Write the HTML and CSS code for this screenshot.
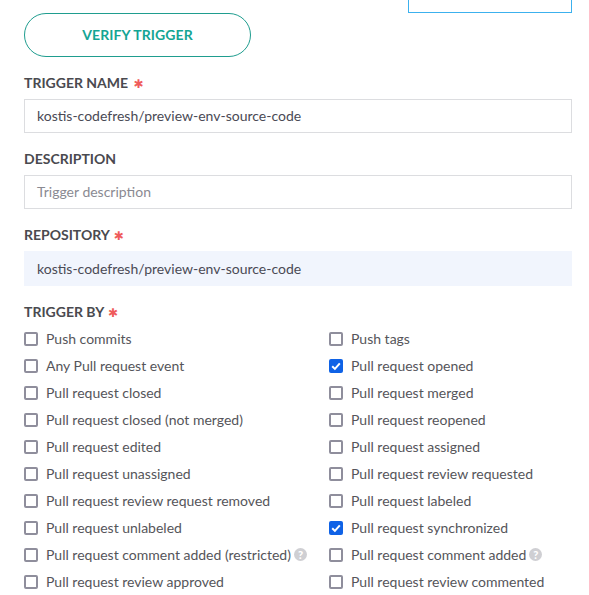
FILE: index.html
```html
<!DOCTYPE html>
<html lang="en">
<head>
<meta charset="utf-8">
<title>Trigger</title>
<link rel="stylesheet" href="styles.css">
</head>
<body>
<main class="form">
  <div class="top"><div class="top-box"></div></div>
  <button class="verify" type="button">VERIFY TRIGGER</button>
  <div class="label name-label">TRIGGER NAME <span class="req req-wide">✱</span></div>
  <div class="field">kostis-codefresh/preview-env-source-code</div>
  <div class="label">DESCRIPTION</div>
  <div class="field placeholder">Trigger description</div>
  <div class="label">REPOSITORY <span class="req">✱</span></div>
  <div class="field readonly">kostis-codefresh/preview-env-source-code</div>
  <div class="label">TRIGGER BY <span class="req">✱</span></div>
  <div class="grid">
    <div class="row"><span class="box"></span>Push commits</div>
    <div class="row"><span class="box"></span>Push tags</div>
    <div class="row"><span class="box"></span>Any Pull request event</div>
    <div class="row"><span class="box on"><svg viewBox="0 0 14 14"><path d="M3.2 7.2 5.9 9.9 10.8 4.3"/></svg></span>Pull request opened</div>
    <div class="row"><span class="box"></span>Pull request closed</div>
    <div class="row"><span class="box"></span>Pull request merged</div>
    <div class="row"><span class="box"></span>Pull request closed (not merged)</div>
    <div class="row"><span class="box"></span>Pull request reopened</div>
    <div class="row"><span class="box"></span>Pull request edited</div>
    <div class="row"><span class="box"></span>Pull request assigned</div>
    <div class="row"><span class="box"></span>Pull request unassigned</div>
    <div class="row"><span class="box"></span>Pull request review requested</div>
    <div class="row"><span class="box"></span>Pull request review request removed</div>
    <div class="row"><span class="box"></span>Pull request labeled</div>
    <div class="row"><span class="box"></span>Pull request unlabeled</div>
    <div class="row"><span class="box on"><svg viewBox="0 0 14 14"><path d="M3.2 7.2 5.9 9.9 10.8 4.3"/></svg></span>Pull request synchronized</div>
    <div class="row"><span class="box"></span>Pull request comment added (restricted)<span class="help">?</span></div>
    <div class="row"><span class="box"></span>Pull request comment added<span class="help">?</span></div>
    <div class="row"><span class="box"></span>Pull request review approved</div>
    <div class="row"><span class="box"></span>Pull request review commented</div>
  </div>
</main>
</body>
</html>
```
FILE: styles.css
```css
html, body {
  margin: 0;
  padding: 0;
  background: #fff;
  height: 595px;
  overflow: hidden;
}
body {
  font-family: Lato, sans-serif;
  color: #4d4d52;
}
.form {
  display: flex;
  flex-direction: column;
  align-items: stretch;
  padding: 0 17px 0 24px;
}
.top {
  display: flex;
  justify-content: flex-end;
  height: 13px;
}
.top-box {
  width: 164px;
  height: 13px;
  box-sizing: border-box;
  border: 1px solid #3cb1ee;
  border-top: 0;
}
.verify {
  width: 227px;
  height: 44px;
  box-sizing: border-box;
  border: 1px solid #1f9d8f;
  border-radius: 22px;
  background: #fff;
  color: #14a594;
  font: 700 14px/1 Lato, sans-serif;
  letter-spacing: 0.1px;
  padding: 0;
}
.label {
  font-size: 14px;
  font-weight: 700;
  line-height: 20px;
  color: #4a4a4f;
  margin-top: 16px;
  margin-bottom: 6px;
  height: 20px;
}
.req {
  display: inline-block;
  font-family: "DejaVu Sans", sans-serif;
  color: #ef5b5b;
  font-size: 12px;
  font-weight: 400;
  line-height: 14px;
  margin-left: 1px;
  vertical-align: 0;
}
.req-wide { margin-left: 2px; }
.field {
  height: 34px;
  box-sizing: border-box;
  border: 1px solid #dcdde0;
  padding-left: 12px;
  font-size: 14px;
  line-height: 32px;
  color: #4a4a55;
}
.placeholder { color: #8a8a92; }
.readonly {
  height: 35px;
  border: 0;
  padding-left: 13px;
  line-height: 36px;
  background: #f1f5fd;
}
.grid {
  display: grid;
  grid-template-columns: 305px 1fr;
  grid-auto-rows: 27px;
  margin-top: -3px;
}
.row {
  display: flex;
  align-items: center;
  font-size: 14px;
  color: #55555a;
  white-space: nowrap;
}
.box {
  flex: none;
  width: 14px;
  height: 14px;
  box-sizing: border-box;
  border: 2px solid #8f8e9c;
  border-radius: 2px;
  margin-right: 8px;
}
.box.on {
  border: 0;
  background: #0f62e6;
}
.box svg {
  display: block;
  width: 14px;
  height: 14px;
  fill: none;
  stroke: #fff;
  stroke-width: 2;
}
.help {
  flex: none;
  width: 13px;
  height: 13px;
  border-radius: 50%;
  background: #cfcfd3;
  color: #fff;
  font-size: 11px;
  font-weight: 900;
  line-height: 13px;
  text-align: center;
  margin-left: 3px;
}
```
